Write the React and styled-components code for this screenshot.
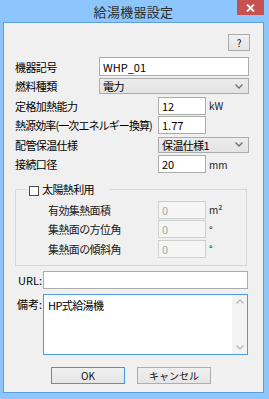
import React from 'react';
import styled, { createGlobalStyle } from 'styled-components';

const GlobalStyle = createGlobalStyle`
  html, body {
    margin: 0;
    padding: 0;
    background: #8cc6fc;
  }
  body {
    font-family: "Noto Sans CJK JP", "Noto Sans", sans-serif;
    font-size: 11px;
    color: #000;
  }
`;

const Window = styled.div`
  width: 269px;
  height: 399px;
  box-sizing: border-box;
  background: #8cc6fc;
  padding: 0 5px 6px 3px;
  display: flex;
  flex-direction: column;
`;

const TitleBar = styled.div`
  height: 22px;
  display: grid;
  grid-template-columns: 1fr auto 1fr;
  align-items: start;
`;

const Title = styled.div`
  grid-column: 2;
  font-size: 13px;
  line-height: 23px;
  color: #2e2e2e;
  letter-spacing: 0.3px;
`;

const CloseButton = styled.div`
  grid-column: 3;
  justify-self: end;
  width: 27px;
  height: 15px;
  background: #c75050;
  display: flex;
  align-items: center;
  justify-content: center;
`;

const Content = styled.div`
  flex: 1;
  border: 1px solid #5c9fdd;
  background: #f0f0f0;
  padding: 11px 14px 0 11px;
  display: flex;
  flex-direction: column;
  letter-spacing: -0.6px;
`;

const HelpRow = styled.div`
  display: flex;
  justify-content: flex-end;
  margin-right: -1px;
`;

const Button = styled.div`
  box-sizing: border-box;
  width: ${p => p.$w}px;
  height: 17px;
  border: 1px solid ${p => (p.$default ? '#3c99e8' : '#adadad')};
  background: linear-gradient(#f0f0f0, #e5e5e5);
  display: flex;
  align-items: center;
  justify-content: center;
  font-size: 10px;
  color: #111;
  letter-spacing: 0;
`;

const Form = styled.div`
  margin-top: 5.75px;
  display: flex;
  flex-direction: column;
`;

const Row = styled.div`
  height: 19.5px;
  display: flex;
  align-items: center;
  padding-left: ${p => p.$indent || 0}px;
`;

const Label = styled.div`
  flex: 0 0 ${p => p.$w}px;
  white-space: nowrap;
  letter-spacing: ${p => (p.$tight ? '-0.9px' : 'inherit')};
  color: ${p => (p.$muted ? '#1a1a1a' : '#000')};
`;

const TextBox = styled.input`
  box-sizing: border-box;
  width: ${p => p.$w}px;
  height: ${p => p.$h || 18}px;
  margin: 0;
  padding: 0 3px;
  border: 1px solid ${p => (p.disabled ? '#cfcfcf' : '#acacac')};
  background: ${p => (p.disabled ? '#f5f5f5' : '#ffffff')};
  color: ${p => (p.disabled ? '#a8a8a8' : '#000')};
  font: inherit;
  letter-spacing: 0;
  outline: none;
`;

const Unit = styled.span`
  margin-left: 3px;
  font-size: 10px;
  letter-spacing: 0;
  color: #222;
`;

const Combo = styled.div`
  box-sizing: border-box;
  width: ${p => p.$w}px;
  height: 16px;
  border: 1px solid #acacac;
  background: linear-gradient(#ececec, #e3e3e3);
  display: flex;
  align-items: center;
  justify-content: space-between;
  padding: 0 5px 0 3px;
`;

const Group = styled.fieldset`
  margin: 9.25px 2px 0 0;
  padding: 5px 0 6px 0;
  border: 1px solid #d7d7d7;
  min-width: 0;
`;

const Legend = styled.legend`
  margin-left: 10px;
  padding: 0 15px 0 3px;
  height: 12px;
  display: flex;
  align-items: center;
  gap: 3px;
`;

const CheckBox = styled.span`
  box-sizing: border-box;
  width: 10px;
  height: 10px;
  margin-top: 3px;
  border: 1px solid #4d4d4d;
  background: #fff;
`;

const FieldRow = styled.div`
  margin-top: ${p => p.$mt}px;
  display: flex;
  align-items: ${p => (p.$top ? 'flex-start' : 'center')};
  gap: 1px;
`;

const SideLabel = styled.div`
  flex: 0 0 27px;
  text-align: right;
  padding-top: ${p => (p.$top ? 2 : 0)}px;
  letter-spacing: 0;
`;

const Memo = styled.div`
  box-sizing: border-box;
  width: 205px;
  height: 61px;
  border: 1px solid #4d9be6;
  background: #fff;
  display: flex;
`;

const MemoText = styled.div`
  flex: 1;
  padding: 2px 4px;
`;

const ScrollBar = styled.div`
  width: 15px;
  background: #f3f3f3;
  display: flex;
  flex-direction: column;
  justify-content: space-between;
  align-items: center;
  padding: 4px 0;
`;

const ButtonRow = styled.div`
  margin-top: 12.5px;
  display: flex;
  justify-content: center;
  gap: 12px;
  margin-left: -2px;
`;

const Chevron = ({ up, color = '#6d6d6d' }) => (
  <svg width="8" height="5" viewBox="0 0 8 5">
    <path
      d={up ? 'M0.5 4.5 L4 1 L7.5 4.5' : 'M0.5 0.5 L4 4 L7.5 0.5'}
      fill="none"
      stroke={color}
      strokeWidth="1.3"
    />
  </svg>
);

const mainRows = [
  { label: '機器記号', w: 84, kind: 'text', value: 'WHP_01', width: 150, h: 19 },
  { label: '燃料種類', w: 84, kind: 'combo', value: '電力', width: 150 },
  { label: '定格加熱能力', w: 143, kind: 'text', value: '12', width: 48, unit: 'kW' },
  { label: '熱源効率(一次エネルギー換算)', w: 143, kind: 'text', value: '1.77', width: 48, tight: true },
  { label: '配管保温仕様', w: 143, kind: 'combo', value: '保温仕様1', width: 91 },
  { label: '接続口径', w: 143, kind: 'text', value: '20', width: 48, unit: 'mm' },
];

const solarRows = [
  { label: '有効集熱面積', unit: 'm²' },
  { label: '集熱面の方位角', unit: '°' },
  { label: '集熱面の傾斜角', unit: '°' },
];

export default function App() {
  return (
    <>
      <GlobalStyle />
      <Window>
        <TitleBar>
          <Title>給湯機器設定</Title>
          <CloseButton>
            <svg width="9" height="8" viewBox="0 0 9 8">
              <path d="M1 0.5 L8 7.5 M8 0.5 L1 7.5" stroke="#fff" strokeWidth="1.8" />
            </svg>
          </CloseButton>
        </TitleBar>
        <Content>
          <HelpRow>
            <Button $w={22}>?</Button>
          </HelpRow>
          <Form>
            {mainRows.map(r => (
              <Row key={r.label}>
                <Label $w={r.w} $tight={r.tight}>{r.label}</Label>
                {r.kind === 'text' ? (
                  <TextBox $w={r.width} $h={r.h} defaultValue={r.value} readOnly />
                ) : (
                  <Combo $w={r.width}>
                    <span>{r.value}</span>
                    <Chevron />
                  </Combo>
                )}
                {r.unit && <Unit>{r.unit}</Unit>}
              </Row>
            ))}
          </Form>
          <Group>
            <Legend>
              <CheckBox />
              <span>太陽熱利用</span>
            </Legend>
            {solarRows.map(r => (
              <Row key={r.label} $indent={32}>
                <Label $w={110} $muted>{r.label}</Label>
                <TextBox $w={48} defaultValue="0" disabled />
                <Unit>{r.unit}</Unit>
              </Row>
            ))}
          </Group>
          <FieldRow $mt={5.5}>
            <SideLabel>URL:</SideLabel>
            <TextBox $w={205} defaultValue="" readOnly />
          </FieldRow>
          <FieldRow $mt={4.5} $top>
            <SideLabel $top>備考:</SideLabel>
            <Memo>
              <MemoText>HP式給湯機</MemoText>
              <ScrollBar>
                <Chevron up color="#b8b8b8" />
                <Chevron color="#b8b8b8" />
              </ScrollBar>
            </Memo>
          </FieldRow>
          <ButtonRow>
            <Button $w={74} $default>OK</Button>
            <Button $w={74}>キャンセル</Button>
          </ButtonRow>
        </Content>
      </Window>
    </>
  );
}
